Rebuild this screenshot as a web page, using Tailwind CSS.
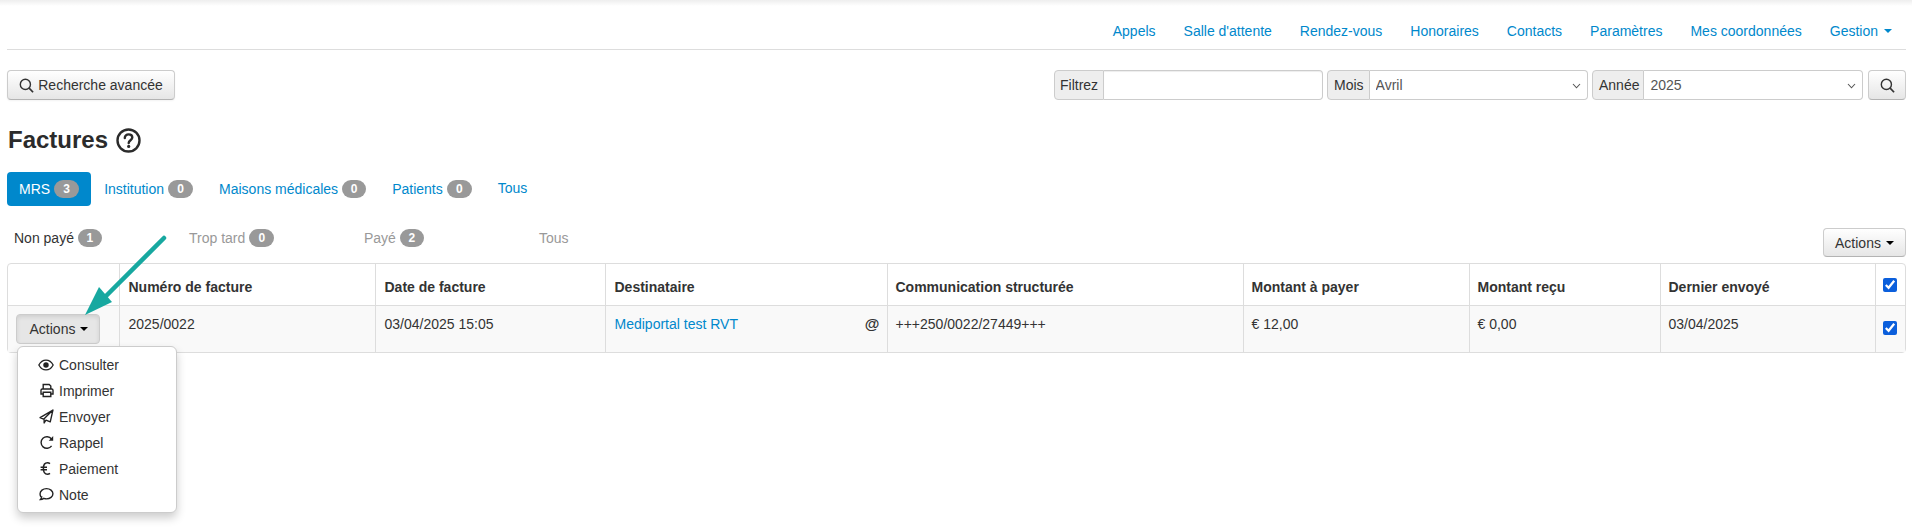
<!DOCTYPE html>
<html lang="fr">
<head>
  <meta charset="UTF-8" />
  <title>Factures</title>
  <script src="https://cdn.jsdelivr.net/npm/@tailwindcss/browser@4"></script>
</head>
<body class="relative h-[530px] overflow-hidden bg-white font-['Liberation_Sans',Arial,sans-serif] text-[14px] leading-[20px] text-[#333]">
  <div class="h-[6px] bg-linear-to-b from-[#eeeeee] to-white"></div>

  <div class="pl-[7px] pr-[6px]">
    <!-- top nav -->
    <nav class="flex h-[44px] items-start justify-end border-b border-[#ddd] pt-[15px] pr-[14px] text-[#0088cc]">
      <div class="flex gap-[28px]">
        <a>Appels</a>
        <a>Salle d'attente</a>
        <a>Rendez-vous</a>
        <a>Honoraires</a>
        <a>Contacts</a>
        <a>Paramètres</a>
        <a>Mes coordonnées</a>
        <a class="flex items-center">Gestion<span class="ml-[6px] h-0 w-0 border-x-[4px] border-t-[4px] border-x-transparent border-t-[#0088cc]"></span></a>
      </div>
    </nav>

    <!-- toolbar -->
    <div class="mt-[20px] flex h-[30px] items-stretch justify-between">
      <button class="flex w-[168px] items-center justify-center gap-[4px] rounded-[4px] border border-[#ccc] border-b-[#b3b3b3] bg-linear-to-b from-white to-[#e6e6e6] shadow-[0_1px_2px_rgba(0,0,0,0.05)]">
        <svg class="h-[15px] w-[15px]" viewBox="0 0 16 16" fill="none" stroke="#333" stroke-width="1.5"><circle cx="6.8" cy="6.8" r="5.4"/><path d="M10.8 10.8l4.2 4.4" stroke-width="1.8"/></svg>
        Recherche avancée
      </button>

      <div class="flex items-stretch">
        <div class="flex w-[269px]">
          <span class="flex items-center rounded-l-[4px] border border-[#ccc] bg-[#eee] pl-[5px] pr-[5px]">Filtrez</span>
          <input class="min-w-0 flex-1 rounded-r-[4px] border border-l-0 border-[#ccc] shadow-[inset_0_1px_1px_rgba(0,0,0,0.075)]" />
        </div>
        <div class="ml-[4px] flex w-[261px]">
          <span class="flex items-center rounded-l-[4px] border border-[#ccc] bg-[#eee] pl-[6px] pr-[5px]">Mois</span>
          <div class="relative flex min-w-0 flex-1">
            <select class="w-full appearance-none rounded-r-[4px] border border-l-0 border-[#ccc] bg-white pl-[6px] text-[#555]"><option>Avril</option></select>
            <svg class="absolute right-[7px] top-[13px] h-[6px] w-[9px]" viewBox="0 0 9 6" fill="none" stroke="#555" stroke-width="1.1"><path d="M1 1l3.5 3.8L8 1"/></svg>
          </div>
        </div>
        <div class="ml-[4px] flex w-[271px]">
          <span class="flex items-center rounded-l-[4px] border border-[#ccc] bg-[#eee] pl-[6px] pr-[4px]">Année</span>
          <div class="relative flex min-w-0 flex-1">
            <select class="w-full appearance-none rounded-r-[4px] border border-l-0 border-[#ccc] bg-white pl-[6px] text-[#555]"><option>2025</option></select>
            <svg class="absolute right-[7px] top-[13px] h-[6px] w-[9px]" viewBox="0 0 9 6" fill="none" stroke="#555" stroke-width="1.1"><path d="M1 1l3.5 3.8L8 1"/></svg>
          </div>
        </div>
        <button class="ml-[5px] flex w-[38px] items-center justify-center rounded-[4px] border border-[#ccc] border-b-[#b3b3b3] bg-linear-to-b from-white to-[#e6e6e6]">
          <svg class="h-[15px] w-[15px]" viewBox="0 0 16 16" fill="none" stroke="#333" stroke-width="1.5"><circle cx="6.8" cy="6.8" r="5.4"/><path d="M10.8 10.8l4.2 4.4" stroke-width="1.8"/></svg>
        </button>
      </div>
    </div>

    <!-- title -->
    <h1 class="mt-[23px] flex h-[34px] items-center gap-[8px] pl-[1px] text-[24px] font-bold text-[#2b2b2b]">
      Factures
      <svg class="h-[25px] w-[25px]" viewBox="0 0 25 25" fill="none" stroke="#2b2b2b" stroke-width="2.4"><circle cx="12.5" cy="12.5" r="11"/><path d="M8.8 10c0-2.400 1.700-3.600 3.800-3.600s3.700 1.200 3.700 3.200c0 2.600-3.600 2.800-3.600 5.400" stroke-linecap="round"/><circle cx="12.700" cy="18.400" r="1.600" fill="#2b2b2b" stroke="none"/></svg>
    </h1>

    <!-- first tabs -->
    <ul class="mt-[15px] flex h-[34px] gap-[2px]">
      <li class="flex h-[34px] items-center gap-[4px] rounded-[4px] bg-[#0088cc] px-[12px] pb-[1px] text-white">MRS <span class="flex h-[18px] w-[25px] items-center justify-center rounded-[9px] bg-[#999] text-[12px] font-bold text-white">3</span></li>
      <li class="-ml-[1px] flex h-[34px] items-center gap-[4px] px-[12px] pb-[1px] text-[#0088cc]">Institution <span class="flex h-[18px] w-[25px] items-center justify-center rounded-[9px] bg-[#999] text-[12px] font-bold text-white">0</span></li>
      <li class="flex h-[34px] items-center gap-[4px] px-[12px] pb-[1px] text-[#0088cc]">Maisons médicales <span class="flex h-[18px] w-[24px] items-center justify-center rounded-[9px] bg-[#999] text-[12px] font-bold text-white">0</span></li>
      <li class="flex h-[34px] items-center gap-[4px] px-[12px] pb-[1px] text-[#0088cc]">Patients <span class="flex h-[18px] w-[25px] items-center justify-center rounded-[9px] bg-[#999] text-[12px] font-bold text-white">0</span></li>
      <li class="flex h-[34px] items-center px-[12px] pb-[3px] text-[#0088cc]">Tous</li>
    </ul>

    <!-- second tabs -->
    <div class="mt-[22px] flex h-[29px] justify-between">
      <ul class="flex items-start pl-[7px]">
        <li class="flex h-[20px] w-[175px] items-center gap-[4px]">Non payé <span class="flex h-[18px] w-[24px] items-center justify-center rounded-[9px] bg-[#999] text-[12px] font-bold text-white">1</span></li>
        <li class="flex h-[20px] w-[175px] items-center gap-[4px] text-[#999]">Trop tard <span class="flex h-[18px] w-[25px] items-center justify-center rounded-[9px] bg-[#999] text-[12px] font-bold text-white">0</span></li>
        <li class="flex h-[20px] w-[175px] items-center gap-[4px] text-[#999]">Payé <span class="flex h-[18px] w-[24px] items-center justify-center rounded-[9px] bg-[#999] text-[12px] font-bold text-white">2</span></li>
        <li class="flex h-[20px] w-[175px] items-center text-[#999]">Tous</li>
      </ul>
      <button class="flex w-[83px] items-center justify-center gap-[5px] rounded-[4px] border border-[#ccc] border-b-[#b3b3b3] bg-linear-to-b from-white to-[#e6e6e6]">
        Actions<span class="h-0 w-0 border-x-[4px] border-t-[4px] border-x-transparent border-t-black"></span>
      </button>
    </div>

    <!-- table -->
    <div class="mt-[6px] rounded-[4px] border border-[#ddd]">
      <table class="w-full table-fixed border-collapse">
        <colgroup>
          <col class="w-[111px]" /><col class="w-[256px]" /><col class="w-[230px]" /><col class="w-[282px]" /><col class="w-[356px]" /><col class="w-[226px]" /><col class="w-[191px]" /><col class="w-[215px]" /><col />
        </colgroup>
        <thead>
          <tr class="h-[41px] font-bold">
            <th class="border-r border-b border-[#ddd]"></th>
            <th class="border-r border-b border-[#ddd] pl-[9px] pr-[8px] pt-[5px] text-left align-middle">Numéro de facture</th>
            <th class="border-r border-b border-[#ddd] pl-[9px] pr-[8px] pt-[5px] text-left align-middle">Date de facture</th>
            <th class="border-r border-b border-[#ddd] pl-[9px] pr-[8px] pt-[5px] text-left align-middle">Destinataire</th>
            <th class="border-r border-b border-[#ddd] px-[8px] pt-[5px] text-left align-middle">Communication structurée</th>
            <th class="border-r border-b border-[#ddd] px-[8px] pt-[5px] text-left align-middle">Montant à payer</th>
            <th class="border-r border-b border-[#ddd] px-[8px] pt-[5px] text-left align-middle">Montant reçu</th>
            <th class="border-r border-b border-[#ddd] px-[8px] pt-[5px] text-left align-middle">Dernier envoyé</th>
            <th class="border-b border-[#ddd] pt-[5px] text-center align-middle"><input type="checkbox" checked class="h-[14px] w-[14px] accent-[#0b5fdc]" /></th>
          </tr>
        </thead>
        <tbody>
          <tr class="h-[47px] bg-[#f9f9f9] align-top">
            <td class="relative border-r border-[#ddd] pl-[8px] pt-[8px]">
              <button class="flex h-[30px] w-[84px] items-center justify-center gap-[5px] rounded-[4px] border border-[#ccc] bg-[#e6e6e6] pl-[2px] shadow-[inset_0_2px_4px_rgba(0,0,0,0.1)]">
                Actions<span class="h-0 w-0 border-x-[4px] border-t-[4px] border-x-transparent border-t-black"></span>
              </button>
              <!-- open dropdown -->
              <ul class="absolute left-[9px] top-[40px] z-10 h-[167px] w-[160px] rounded-[6px] border border-[#ccc] bg-white pt-[5px] shadow-[0_5px_10px_rgba(0,0,0,0.2)]">
                <li class="flex h-[26px] items-center"><span class="flex w-[41px] justify-end pr-[5px]"><svg class="h-[14px] w-[16px]" viewBox="0 0 17 14" fill="none" stroke="#222" stroke-width="1.400"><path d="M.9 7C2.700 3.600 5.300 1.800 8.500 1.800S14.300 3.600 16.100 7c-1.800 3.400-4.400 5.200-7.600 5.200S2.700 10.400.9 7z"/><circle cx="8.500" cy="7" r="2.900" fill="#222" stroke="none"/></svg></span>Consulter</li>
                <li class="flex h-[26px] items-center"><span class="flex w-[41px] justify-end pr-[5px]"><svg class="h-[15px] w-[14px]" viewBox="0 0 14 14" fill="none" stroke="#222" stroke-width="1.400"><path d="M3.200 5.500V1h6l1.600 1.500v3M3.200 10.500H1V6.800c0-.8.500-1.300 1.300-1.300h9.400c.8 0 1.300.5 1.300 1.300v3.700h-2.200"/><path d="M3.200 8.700h7.600V13H3.200z"/></svg></span>Imprimer</li>
                <li class="flex h-[26px] items-center"><span class="flex w-[41px] justify-end pr-[5px]"><svg class="h-[15px] w-[15px]" viewBox="0 0 14 14" fill="none" stroke="#222" stroke-width="1.300" stroke-linejoin="round"><path d="M13 1L1 8l3.300 1.500L13 1 10.500 12 6.500 10.400 4.800 13V9.700"/></svg></span>Envoyer</li>
                <li class="flex h-[26px] items-center"><span class="flex w-[41px] justify-end pr-[5px]"><svg class="h-[15px] w-[14px]" viewBox="0 0 14 14" fill="none" stroke="#222" stroke-width="1.400"><path d="M11.600 10.400A5.800 5.800 0 1 1 11.500 3.500"/><path d="M13.200.6v4.600H8.700z" fill="#222" stroke="none"/></svg></span>Rappel</li>
                <li class="flex h-[26px] items-center"><span class="flex w-[41px] justify-end pr-[8px]"><svg class="h-[15px] w-[11px]" viewBox="0 0 11 14" fill="none" stroke="#222" stroke-width="1.500"><path d="M10 2.200C9.200 1.600 8.400 1.300 7.500 1.300 5 1.300 3.400 3.600 3.400 7s1.600 5.700 4.100 5.700c.9 0 1.700-.3 2.500-.9M.6 5.700h6.400M.6 8.300h6.400"/></svg></span>Paiement</li>
                <li class="flex h-[26px] items-center"><span class="flex w-[41px] justify-end pr-[5px]"><svg class="h-[15px] w-[15px]" viewBox="0 0 14 14" fill="none" stroke="#222" stroke-width="1.300"><path d="M7 1.500c3.300 0 6 2.100 6 4.800s-2.700 4.800-6 4.800c-.9 0-1.700-.2-2.500-.5-.9.7-2 1.200-3.300 1.200.7-.7 1.200-1.600 1.300-2.500C1.700 9.400 1 8 1 6.300c0-2.700 2.700-4.800 6-4.800z"/></svg></span>Note</li>
              </ul>
            </td>
            <td class="border-r border-[#ddd] pl-[9px] pr-[8px] pt-[8px]">2025/0022</td>
            <td class="border-r border-[#ddd] pl-[9px] pr-[8px] pt-[8px]">03/04/2025 15:05</td>
            <td class="relative border-r border-[#ddd] pl-[9px] pr-[8px] pt-[8px] text-[#0088cc]">Mediportal test RVT<span class="absolute right-[7px] top-[8px] text-[15px] font-bold text-[#333]">@</span></td>
            <td class="border-r border-[#ddd] px-[8px] pt-[8px]">+++250/0022/27449+++</td>
            <td class="border-r border-[#ddd] px-[8px] pt-[8px]">€ 12,00</td>
            <td class="border-r border-[#ddd] px-[8px] pt-[8px]">€ 0,00</td>
            <td class="border-r border-[#ddd] px-[8px] pt-[8px]">03/04/2025</td>
            <td class="pt-[14px] text-center"><input type="checkbox" checked class="h-[14px] w-[14px] accent-[#0b5fdc]" /></td>
          </tr>
        </tbody>
      </table>
    </div>
  </div>

  <!-- annotation arrow over the page -->
  <svg class="absolute left-0 top-0 z-20 h-[530px] w-[1912px]" viewBox="0 0 1912 530" fill="none">
    <path d="M164 238L100 302" stroke="#17a8a0" stroke-width="4.500" stroke-linecap="round"/>
    <path d="M85 315l14-28 13 15z" fill="#17a8a0"/>
  </svg>
</body>
</html>
